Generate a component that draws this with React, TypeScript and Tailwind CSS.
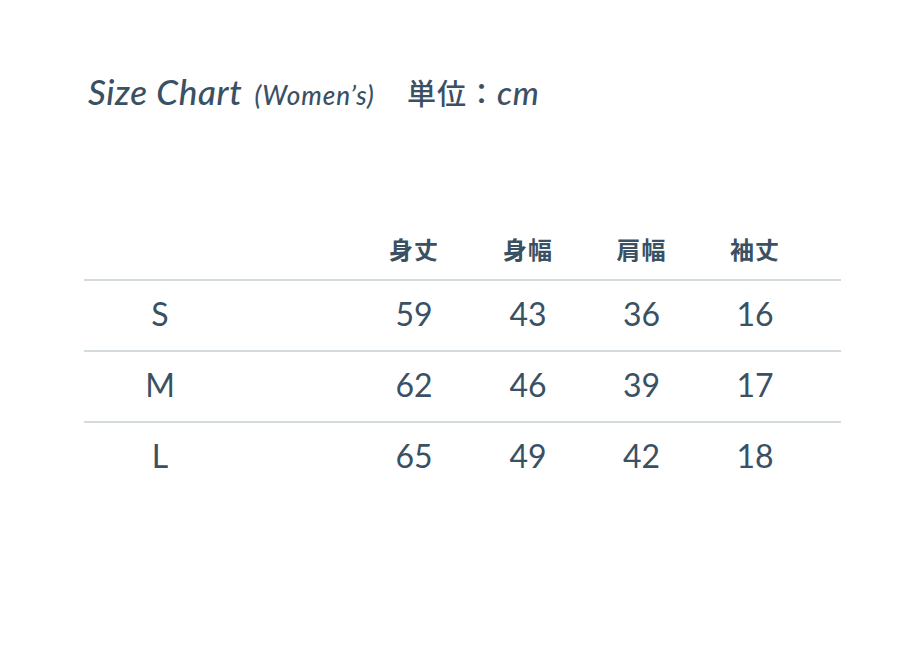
export default function App() {
  const cols = ['身丈', '身幅', '肩幅', '袖丈']
  const rows = [
    { size: 'S', values: ['59', '43', '36', '16'] },
    { size: 'M', values: ['62', '46', '39', '17'] },
    { size: 'L', values: ['65', '49', '42', '18'] },
  ]

  const grid =
    'grid grid-cols-[152px_121px_114px_114px_113px_114px] items-center'

  return (
    <main
      className="w-[924px] h-[660px] bg-white text-[#3a5164] overflow-hidden"
      style={{ fontFamily: 'Lato, "Noto Sans CJK JP", sans-serif' }}
    >
      {/* TITLE */}
      <div className="pt-[74px] pl-[88px] flex items-baseline">
        <h1 className="text-[35px] italic font-medium leading-none tracking-[0.6px]">
          Size Chart
        </h1>
        <span className="ml-[12px] text-[26px] italic font-medium leading-none tracking-[1px]">
          (Women’s)
        </span>
        <span className="ml-[32px] text-[29px] font-medium leading-none tracking-[1px]">
          単位：<span className="italic text-[33px]">cm</span>
        </span>
      </div>

      {/* TABLE */}
      <section className="mt-[106px] ml-[84px] w-[757px]">
        <div className={`${grid} h-[64px] pt-[16px]`}>
          <div />
          <div />
          {cols.map((c) => (
            <div
              key={c}
              className="text-center text-[24px] font-bold tracking-[1px] leading-none"
              style={{ fontFamily: '"Noto Sans CJK JP", sans-serif' }}
            >
              {c}
            </div>
          ))}
          <div />
        </div>

        {rows.map((row) => (
          <div key={row.size}>
            <div className="h-[2px] bg-[#d3dbde]" />
            <div className={`${grid} h-[69px] pt-[10px]`}>
              <div className="text-center text-[32px] leading-none">
                {row.size}
              </div>
              <div />
              {row.values.map((v, j) => (
                <div key={j} className="text-center text-[32px] leading-none">
                  {v}
                </div>
              ))}
              <div />
            </div>
          </div>
        ))}
      </section>
    </main>
  )
}
